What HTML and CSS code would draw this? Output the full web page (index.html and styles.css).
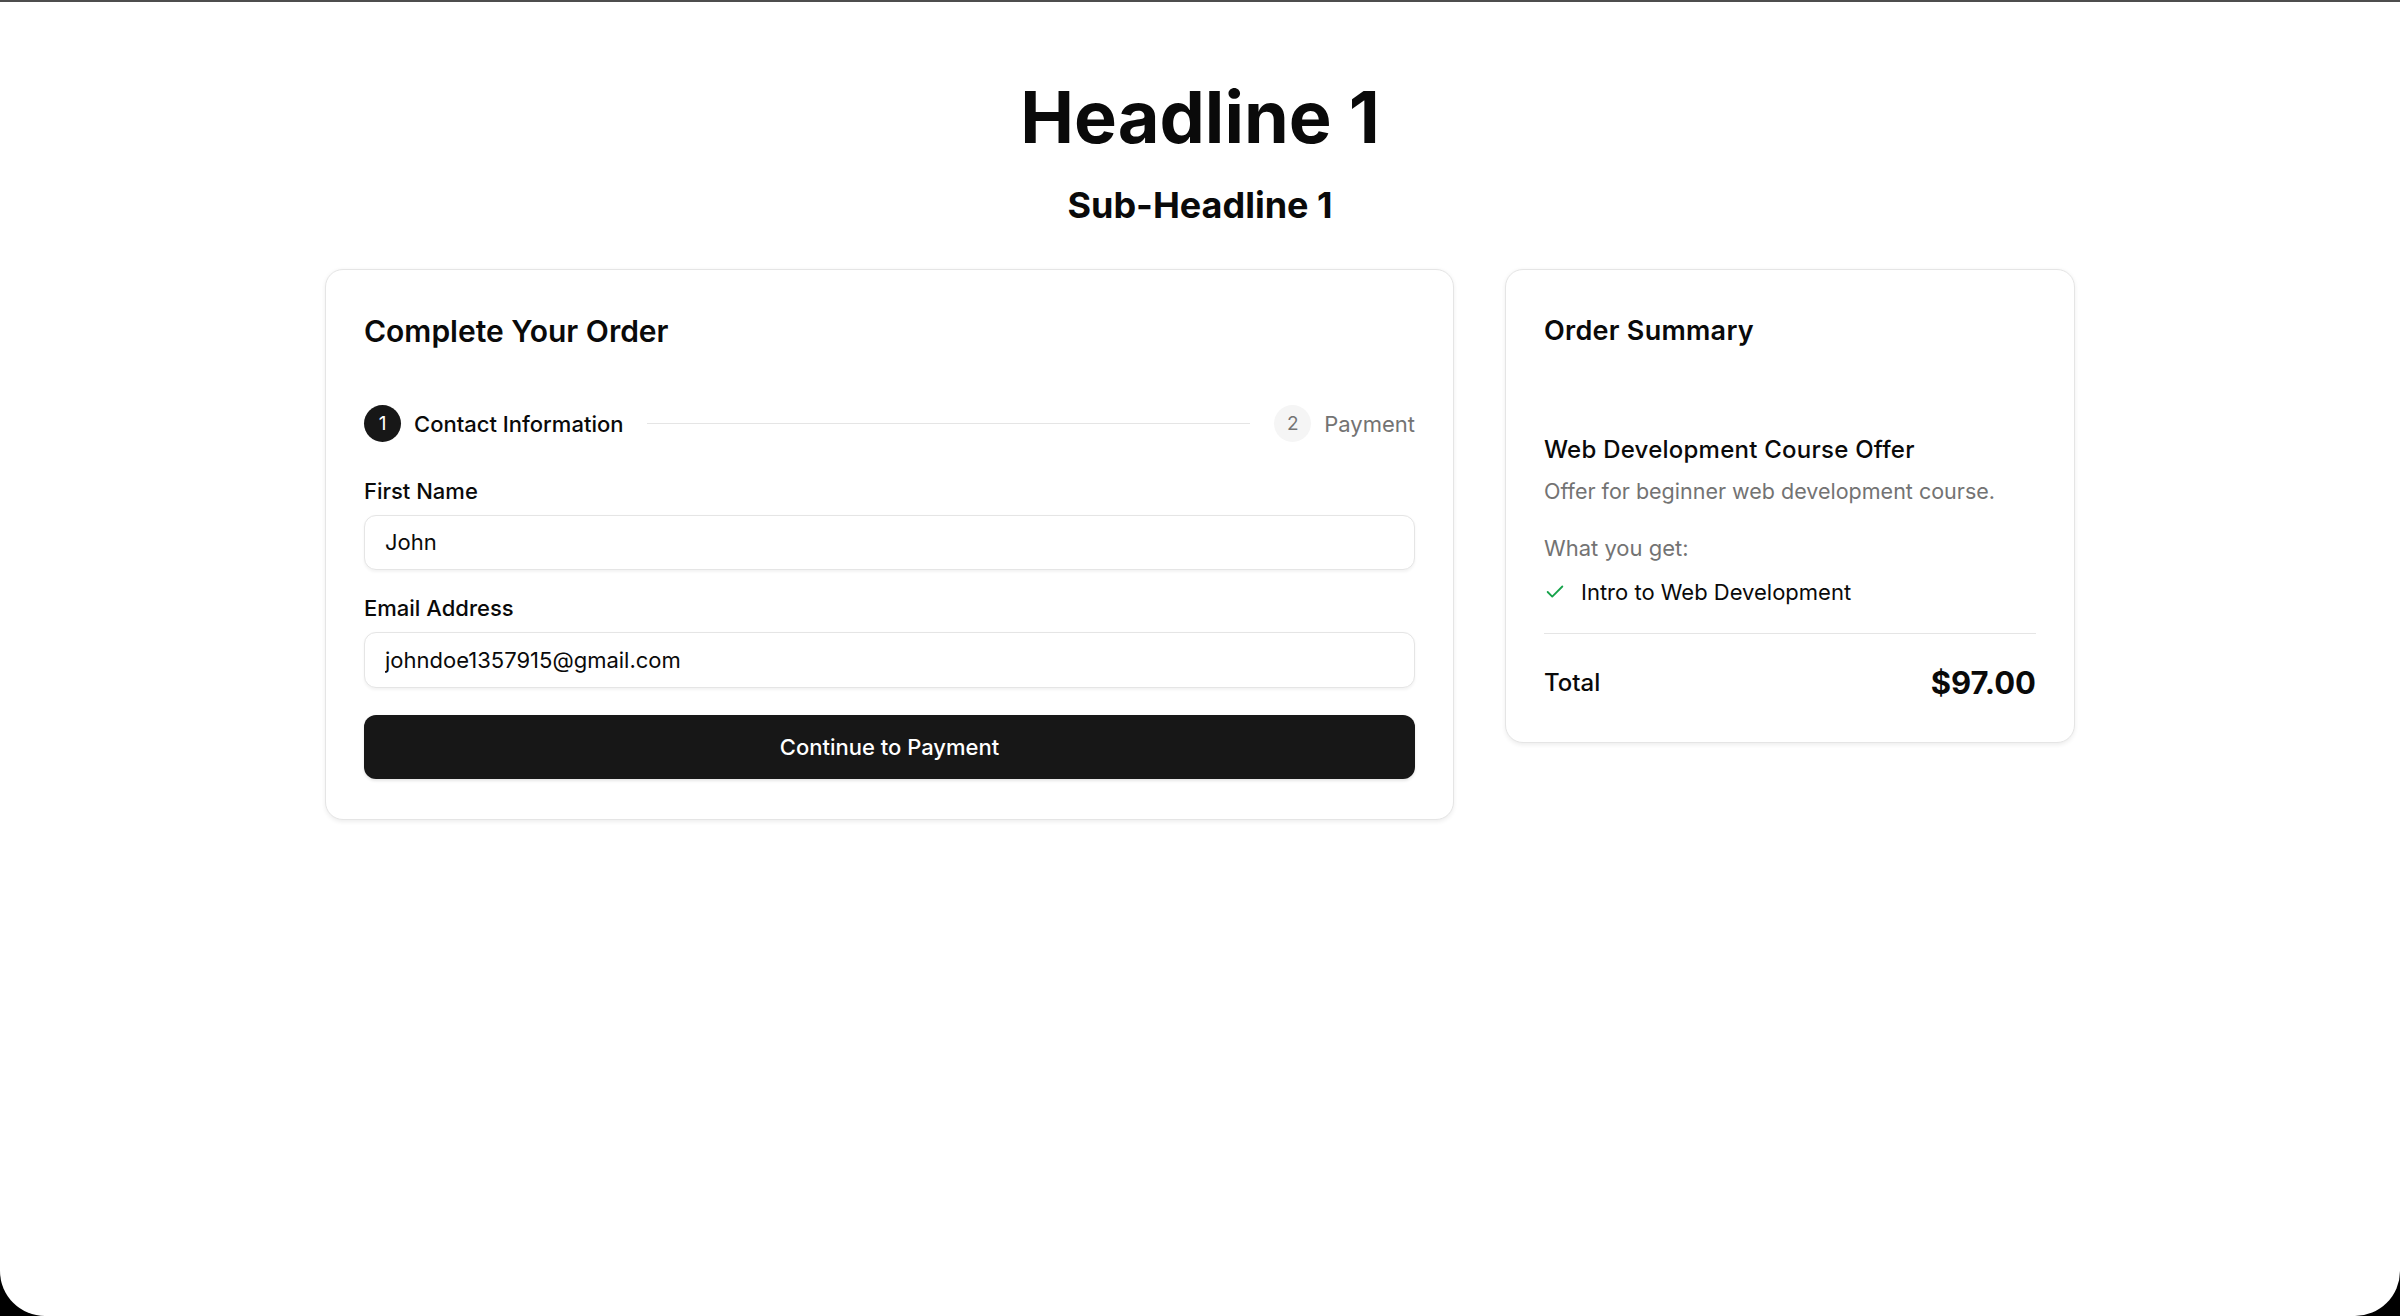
FILE: index.html
```html
<!DOCTYPE html>
<html lang="en">
<head>
<meta charset="utf-8">
<title>Checkout</title>
<link rel="stylesheet" href="styles.css">
</head>
<body>
<main class="page">
  <header class="hero">
    <h1 class="hero-title">Headline 1</h1>
    <h2 class="hero-sub">Sub-Headline 1</h2>
  </header>
  <div class="layout">
    <section class="card checkout">
      <h3 class="card-title">Complete Your Order</h3>
      <div class="stepper">
        <div class="step active">
          <span class="step-num">1</span>
          <span class="step-label">Contact Information</span>
        </div>
        <div class="step-line"></div>
        <div class="step">
          <span class="step-num">2</span>
          <span class="step-label">Payment</span>
        </div>
      </div>
      <form class="form">
        <div class="field">
          <label class="field-label" for="fname">First Name</label>
          <input class="field-input" id="fname" type="text" value="John">
        </div>
        <div class="field">
          <label class="field-label" for="email">Email Address</label>
          <input class="field-input" id="email" type="email" value="johndoe1357915@gmail.com">
        </div>
        <button class="btn" type="button">Continue to Payment</button>
      </form>
    </section>
    <aside class="card summary">
      <h3 class="card-title small">Order Summary</h3>
      <div class="product">
        <div class="product-name">Web Development Course Offer</div>
        <p class="product-desc">Offer for beginner web development course.</p>
        <p class="perks-title">What you get:</p>
        <ul class="perks">
          <li class="perk">
            <svg class="check" viewBox="0 0 24 24" fill="none" stroke="currentColor" stroke-width="2" stroke-linecap="round" stroke-linejoin="round"><path d="M20 6 9 17l-5-5"/></svg>
            <span>Intro to Web Development</span>
          </li>
        </ul>
      </div>
      <div class="divider"></div>
      <div class="total-row">
        <span class="total-label">Total</span>
        <span class="total-price">$97.00</span>
      </div>
    </aside>
  </div>
</main>
</body>
</html>
```
FILE: styles.css
```css
* { box-sizing: border-box; }

html {
  background: #000;
  height: 100%;
}

body {
  margin: 0;
  min-height: 100vh;
  background: #fff;
  border-top: 2px solid #4d4d4d;
  border-radius: 0 0 45px 45px;
  font-family: Inter, "Noto Sans", "Liberation Sans", sans-serif;
  color: #0a0a0a;
  -webkit-font-smoothing: antialiased;
}

.page {
  padding-top: 79px;
}

.hero {
  text-align: center;
}

.hero-title {
  margin: 0 0 25px;
  font-size: 72px;
  line-height: 72px;
  font-weight: 700;
}

.hero-sub {
  margin: 0;
  font-size: 36px;
  line-height: 54px;
  font-weight: 700;
}

.layout {
  display: grid;
  grid-template-columns: 1129px 570px;
  gap: 51px;
  justify-content: center;
  align-items: start;
  margin-top: 37px;
}

.card {
  background: #fff;
  border: 1.5px solid #e5e5e5;
  border-radius: 18px;
  padding: 39.5px 38px 39.5px;
  box-shadow: 0 1.5px 4px rgba(0, 0, 0, 0.07);
}

.summary {
  padding-bottom: 38px;
}

.card-title {
  margin: 0;
  font-size: 30px;
  line-height: 42px;
  font-weight: 600;
}

.card-title.small {
  font-size: 27px;
  letter-spacing: 0.01em;
}

.stepper {
  display: flex;
  align-items: center;
  gap: 24px;
  margin-top: 53.5px;
}

.step {
  display: flex;
  align-items: center;
  gap: 13px;
}

.step-num {
  width: 37px;
  height: 37px;
  border-radius: 50%;
  display: flex;
  align-items: center;
  justify-content: center;
  font-size: 19px;
  background: #f5f5f5;
  color: #737373;
}

.step-label {
  font-size: 22px;
  line-height: 30px;
  color: #737373;
}

.step.active .step-num {
  background: #171717;
  color: #fff;
}

.step.active .step-label {
  color: #0a0a0a;
  font-weight: 500;
}

.step-line {
  flex: 1;
  height: 1.5px;
  background: #e5e5e5;
}

.form {
  margin-top: 33.5px;
  display: flex;
  flex-direction: column;
}

.field + .field {
  margin-top: 23px;
}

.field-label {
  display: block;
  font-size: 22px;
  line-height: 30px;
  font-weight: 500;
  margin-bottom: 9px;
}

.field-input {
  display: block;
  width: 100%;
  height: 55.5px;
  padding: 0 20px;
  border: 1.5px solid #e5e5e5;
  border-radius: 12px;
  box-shadow: 0 1.5px 3px rgba(0, 0, 0, 0.05);
  font-family: inherit;
  font-size: 22px;
  color: #0a0a0a;
  background: #fff;
  outline: none;
}

.btn {
  margin-top: 27.5px;
  height: 64px;
  width: 100%;
  border: none;
  border-radius: 12px;
  background: #171717;
  color: #fff;
  font-family: inherit;
  font-size: 22px;
  font-weight: 500;
  box-shadow: 0 1.5px 3px rgba(0, 0, 0, 0.1);
}

.product {
  margin-top: 80px;
}

.product-name {
  font-size: 24px;
  line-height: 36px;
  font-weight: 500;
  letter-spacing: 0.01em;
}

.product-desc {
  margin: 8px 0 0;
  font-size: 21.5px;
  line-height: 30px;
  color: #737373;
}

.perks-title {
  margin: 27px 0 0;
  font-size: 22px;
  line-height: 30px;
  color: #737373;
}

.perks {
  list-style: none;
  margin: 14px 0 0;
  padding: 0;
}

.perk {
  display: flex;
  align-items: center;
  gap: 15px;
  font-size: 22px;
  line-height: 30px;
}

.check {
  width: 22px;
  height: 22px;
  color: #16a34a;
  flex-shrink: 0;
}

.divider {
  margin-top: 26px;
  height: 1.5px;
  background: #e5e5e5;
}

.total-row {
  margin-top: 28px;
  display: flex;
  justify-content: space-between;
  align-items: center;
}

.total-label {
  font-size: 24px;
  line-height: 36px;
  font-weight: 500;
}

.total-price {
  font-size: 31px;
  line-height: 42px;
  font-weight: 700;
}
```
